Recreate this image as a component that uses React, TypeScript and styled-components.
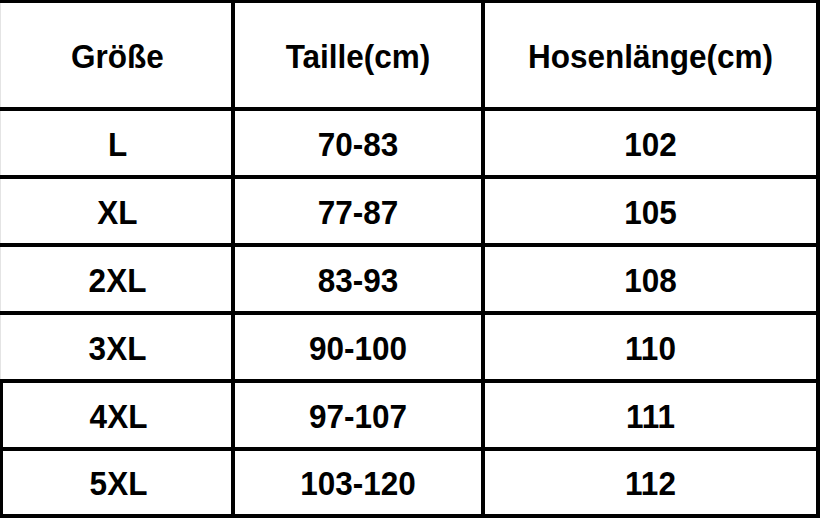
import styled, { createGlobalStyle } from 'styled-components'

const GlobalStyle = createGlobalStyle`
  html, body {
    margin: 0;
    padding: 0;
    background: #ffffff;
  }
`

type Row = {
  size: string
  waist: string
  length: string
}

const rows: Row[] = [
  { size: 'L', waist: '70-83', length: '102' },
  { size: 'XL', waist: '77-87', length: '105' },
  { size: '2XL', waist: '83-93', length: '108' },
  { size: '3XL', waist: '90-100', length: '110' },
  { size: '4XL', waist: '97-107', length: '111' },
  { size: '5XL', waist: '103-120', length: '112' },
]

const Table = styled.div`
  width: 820px;
  height: 518px;
  box-sizing: border-box;
  display: grid;
  grid-template-columns: 231px 246px 331px;
  grid-template-rows: 104px repeat(5, 64px) 63px;
  gap: 4px;
  padding: 3px 4px 4px 0;
  background: #000;
  font-family: 'Liberation Sans', Arial, sans-serif;
  font-weight: 700;
  color: #000;
`

const Cell = styled.div<{ $edge?: 'soft' | 'hard' }>`
  display: flex;
  align-items: center;
  justify-content: center;
  background: #fff;
  box-sizing: border-box;
  font-size: 31.5px;
  padding-left: ${(p) => (p.$edge ? '3px' : '0')};
  border-left: ${(p) =>
    p.$edge === 'hard' ? '3px solid #000' : p.$edge === 'soft' ? '1px solid #e4e4e4' : 'none'};

  span {
    display: inline-block;
    transform: translateY(1px) scaleY(1.08);
  }
`

export default function App() {
  return (
    <>
      <GlobalStyle />
      <Table>
        <Cell $edge="soft">
          <span>Größe</span>
        </Cell>
        <Cell>
          <span>Taille(cm)</span>
        </Cell>
        <Cell>
          <span>Hosenlänge(cm)</span>
        </Cell>
        {rows.map((r, i) => (
          <RowCells key={r.size} row={r} hard={i >= 4} />
        ))}
      </Table>
    </>
  )
}

const RowCells = ({ row, hard }: { row: Row; hard: boolean }) => (
  <>
    <Cell $edge={hard ? 'hard' : 'soft'}>
      <span>{row.size}</span>
    </Cell>
    <Cell>
      <span>{row.waist}</span>
    </Cell>
    <Cell>
      <span>{row.length}</span>
    </Cell>
  </>
)
